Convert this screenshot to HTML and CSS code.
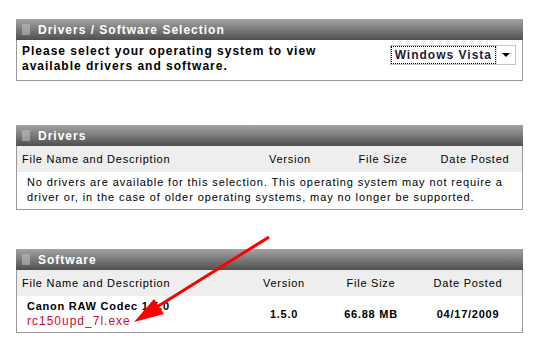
FILE: index.html
```html
<!DOCTYPE html>
<html lang="en">
<head>
    <meta charset="UTF-8">
    <title>Drivers / Software Selection</title>
    <link rel="stylesheet" href="styles.css">
</head>
<body>
    <div class="page">
        <div class="panel panel-select">
            <div class="panel-head"><span class="grip"></span>Drivers / Software Selection</div>
            <div class="select-body">
                <p class="select-text">Please select your operating system to view available drivers and software.</p>
                <div class="dropdown">
                    <span class="dropdown-value">Windows Vista</span>
                    <span class="dropdown-btn"></span>
                </div>
            </div>
        </div>

        <div class="panel panel-drivers">
            <div class="panel-head"><span class="grip"></span>Drivers</div>
            <table class="files">
                <tr class="cols">
                    <th class="c-name">File Name and Description</th>
                    <th class="c-ver">Version</th>
                    <th class="c-size">File Size</th>
                    <th class="c-date">Date Posted</th>
                </tr>
                <tr>
                    <td class="empty" colspan="4">No drivers are available for this selection. This operating system may not require a driver or, in the case of older operating systems, may no longer be supported.</td>
                </tr>
            </table>
        </div>

        <div class="panel panel-software">
            <div class="panel-head"><span class="grip"></span>Software</div>
            <table class="files">
                <tr class="cols">
                    <th class="c-name">File Name and Description</th>
                    <th class="c-ver">Version</th>
                    <th class="c-size">File Size</th>
                    <th class="c-date">Date Posted</th>
                </tr>
                <tr class="row">
                    <td class="c-name">
                        <div class="file-title">Canon RAW Codec 1.5.0</div>
                        <a class="file-link" href="#">rc150upd_7l.exe</a>
                    </td>
                    <td class="c-ver">1.5.0</td>
                    <td class="c-size">66.88 MB</td>
                    <td class="c-date">04/17/2009</td>
                </tr>
            </table>
        </div>

        <svg class="arrow" width="542" height="348" viewBox="0 0 542 348">
            <line x1="269" y1="237" x2="152" y2="310" stroke="#ff0000" stroke-width="3"/>
            <polygon points="134,322 154,299 164,314" fill="#ff0000"/>
        </svg>
    </div>
</body>
</html>
```

FILE: styles.css
```css
body {
    margin: 0;
    background-color: #fff;
    font-family: "Liberation Sans", Arial, sans-serif;
    color: #000;
}
.page {
    position: relative;
    padding: 19px 0 0 16px;
    width: 507px;
}
.panel {
    border: 1px solid #999;
    border-top: none;
}
.panel-drivers {
    margin-top: 44px;
}
.panel-software {
    margin-top: 39px;
}
.panel-head {
    display: flex;
    align-items: center;
    height: 21px;
    margin: 0 -1px;
    padding-left: 6px;
    background: linear-gradient(#a3a3a3, #7a7a7a 50%, #4f4f4f);
    color: #fff;
    font-size: 12px;
    font-weight: bold;
    letter-spacing: 1px;
}
.grip {
    width: 8px;
    height: 11px;
    margin-right: 8px;
    background-image: radial-gradient(circle, #c8c8c8 0.6px, transparent 0.9px);
    background-size: 2px 2px;
    opacity: 0.8;
}
.select-body {
    display: flex;
    justify-content: space-between;
    align-items: flex-start;
    padding: 4px 6px 8px 5px;
    height: 28px;
}
.select-text {
    margin: 0;
    width: 330px;
    font-size: 12px;
    font-weight: bold;
    letter-spacing: 1px;
    line-height: 15px;
}
.dropdown {
    display: flex;
    align-items: stretch;
    height: 18px;
    margin-top: 1px;
    border: 1px solid #c4c4c4;
    font-size: 12px;
    font-weight: bold;
    letter-spacing: 1px;
}
.dropdown-value {
    display: flex;
    align-items: center;
    padding: 0 3px;
    margin: 1px;
    outline: 1px dotted #000;
    color: #1c1c3c;
}
.dropdown-btn {
    width: 18px;
    position: relative;
    border-left: 1px solid #e0e0e0;
}
.dropdown-btn::after {
    content: "";
    position: absolute;
    left: 5px;
    top: 7px;
    border-left: 4px solid transparent;
    border-right: 4px solid transparent;
    border-top: 4px solid #000;
}
.files {
    width: 100%;
    table-layout: fixed;
    border-collapse: collapse;
    font-size: 11px;
    letter-spacing: 0.75px;
}
.files th, .files td {
    box-sizing: border-box;
}
.cols th {
    height: 26px;
    padding: 0;
    background-color: #eee;
    font-weight: normal;
    text-align: center;
}
.cols .c-name {
    text-align: left;
    padding-left: 5px;
}
.panel-drivers .c-name {
    width: 225px;
}
.panel-drivers .c-ver {
    width: 96px;
}
.panel-drivers .c-size {
    width: 90px;
}
.panel-software .c-name {
    width: 223px;
}
.panel-software .c-ver {
    width: 88px;
}
.panel-software .c-size {
    width: 86px;
}
.empty {
    padding: 3px 10px 4px 10px;
    line-height: 15px;
    letter-spacing: 0.9px;
}
.row td {
    height: 36px;
    padding: 0;
    font-weight: bold;
    text-align: center;
}
.row .c-name {
    text-align: left;
    padding-left: 10px;
}
.file-title {
    line-height: 15px;
}
.file-link {
    display: block;
    color: #d00a30;
    font-weight: normal;
    font-size: 12px;
    letter-spacing: 1px;
    line-height: 15px;
    text-decoration: none;
}
.arrow {
    position: absolute;
    left: 0;
    top: 0;
    pointer-events: none;
}
```
